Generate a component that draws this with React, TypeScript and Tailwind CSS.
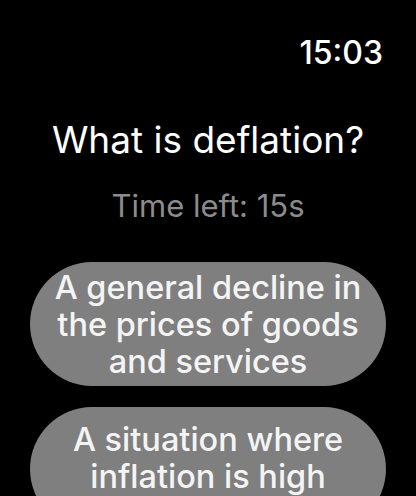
export default function App() {
  return (
    <div
      className="w-[416px] h-[496px] overflow-hidden bg-black text-white"
      style={{ fontFamily: "Inter, 'Noto Sans', sans-serif" }}
    >
      <div className="flex justify-end pr-[33px] pt-[34px]">
        <span className="text-[32px] leading-[38px] font-medium">15:03</span>
      </div>
      <div className="mt-[48px] text-center text-[37px] leading-[40px]">What is deflation?</div>
      <div className="mt-[28px] text-center text-[31px] leading-[36px] text-[#8c8c8c]">Time left: 15s</div>
      <div className="mt-[38px] flex flex-col gap-[21px] px-[30px]">
        <button className="flex h-[124px] items-center justify-center rounded-full bg-[#7f7f7f] px-2 text-[32.5px] leading-[37px] font-medium text-[#f4f4f4]">
          A general decline in the prices of goods and services
        </button>
        <button className="flex h-[124px] items-start justify-center rounded-full bg-[#7f7f7f] px-2 pt-[14px] text-[32.5px] leading-[37px] font-medium text-[#f4f4f4]">
          A situation where inflation is high
        </button>
      </div>
    </div>
  );
}
